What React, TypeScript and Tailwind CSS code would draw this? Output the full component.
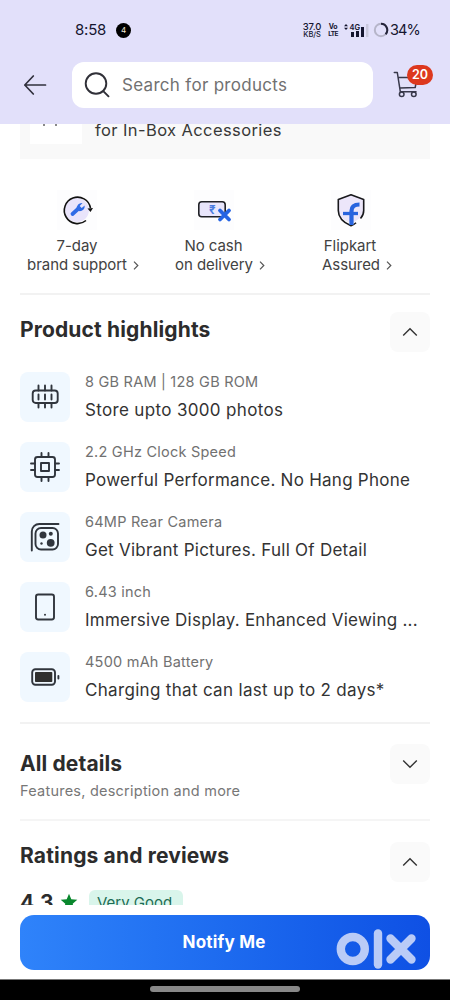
import React from 'react';

interface Highlight {
  id: string;
  label: string;
  value: string;
  valueClass: string;
  icon: React.ReactNode;
}

const stroke = {
  fill: 'none',
  stroke: '#30353d',
  strokeWidth: 1.9,
  strokeLinecap: 'round' as const,
  strokeLinejoin: 'round' as const,
};

const highlights: Highlight[] = [
  {
    id: 'memory',
    label: '8 GB RAM | 128 GB ROM',
    value: 'Store upto 3000 photos',
    valueClass: 'tracking-[0.34px]',
    icon: (
      <svg width="30" height="30" viewBox="0 0 30 30" {...stroke}>
        <rect x="2.7" y="8.5" width="25" height="12.5" rx="3" />
        <path d="M8.5 3.5v5M15 3.5v5M21.5 3.5v5M8.5 21v4.5M15 21v4.5M21.5 21v4.5M8.5 12.5v5M15 12.5v5M21.5 12.5v5" />
      </svg>
    ),
  },
  {
    id: 'processor',
    label: '2.2 GHz Clock Speed',
    value: 'Powerful Performance. No Hang Phone',
    valueClass: 'tracking-[0.26px]',
    icon: (
      <svg width="30" height="30" viewBox="0 0 30 30" {...stroke}>
        <rect x="5" y="5" width="20" height="20" rx="2.5" />
        <rect x="11" y="11" width="8" height="8" />
        <path d="M11.5 1v4M18.5 1v4M11.5 25v4M18.5 25v4M1 11.5h4M1 18h4M25 11.5h4M25 18h4" />
      </svg>
    ),
  },
  {
    id: 'camera',
    label: '64MP Rear Camera',
    value: 'Get Vibrant Pictures. Full Of Detail',
    valueClass: 'tracking-[0.26px]',
    icon: (
      <svg width="30" height="30" viewBox="0 0 30 30" {...stroke}>
        <path d="M1.8 28.5V9.5a7.5 7.5 0 0 1 7.5-7.5H28.5" />
        <rect x="5.5" y="6" width="22.5" height="21.5" rx="5.5" />
        <circle cx="13" cy="13" r="3.5" fill="#30353d" stroke="none" />
        <circle cx="20.7" cy="20.8" r="3.9" fill="#30353d" stroke="none" />
        <circle cx="20.8" cy="11.7" r="2" fill="#30353d" stroke="none" />
        <circle cx="11.5" cy="21.5" r="1.2" fill="#30353d" stroke="none" />
      </svg>
    ),
  },
  {
    id: 'display',
    label: '6.43 inch',
    value: 'Immersive Display. Enhanced Viewing ...',
    valueClass: 'tracking-[0.24px]',
    icon: (
      <svg width="30" height="30" viewBox="0 0 30 30" {...stroke}>
        <rect x="6" y="2.5" width="18" height="25" rx="2.2" />
        <circle cx="15" cy="22.7" r="1" fill="#30353d" stroke="none" />
      </svg>
    ),
  },
  {
    id: 'battery',
    label: '4500 mAh Battery',
    value: 'Charging that can last up to 2 days*',
    valueClass: 'tracking-[0.32px]',
    icon: (
      <svg width="30" height="30" viewBox="0 0 30 30" {...stroke}>
        <rect x="2.2" y="7.3" width="22.8" height="15.4" rx="3.2" />
        <rect x="5" y="10" width="17.3" height="10" rx="0.8" fill="#30302f" stroke="none" />
        <path d="M28.4 14v2.5" />
      </svg>
    ),
  },
];

function Chevron({ up = false }: { up?: boolean }) {
  return (
    <button className="flex h-10 w-10 shrink-0 items-center justify-center rounded-lg bg-[#fafafa]">
      <svg width="16" height="10" viewBox="0 0 16 10" fill="none" stroke="#333" strokeWidth="1.4">
        <path d={up ? 'M1.2 8.5 8 1.7l6.8 6.8' : 'M1.2 1.5 8 8.3l6.8-6.8'} />
      </svg>
    </button>
  );
}

function SmallChevron() {
  return (
    <svg className="ml-1.5 inline-block" width="6" height="9" viewBox="0 0 6 9" fill="none" stroke="#555" strokeWidth="1.2">
      <path d="M1 .7 4.8 4.5 1 8.3" />
    </svg>
  );
}

function StatusBar() {
  return (
    <div className="flex h-[60px] items-center pl-[75px] text-[#15152f]">
      <span className="w-[41px] text-[15px] tracking-[-0.2px]">8:58</span>
      <span className="flex h-[15px] w-[15px] items-center justify-center rounded-full bg-black text-[8px] text-[#f4e9d5]">4</span>
      <div className="ml-[171px] flex w-[20px] flex-col items-center font-medium">
        <span className="text-[9.5px] leading-[9px] tracking-[-0.1px]">37.0</span>
        <span className="text-[7.5px] leading-[8px] tracking-[-0.1px]">KB/S</span>
      </div>
      <div className="ml-[6px] flex w-[10px] flex-col items-center text-[7px] leading-[8px] font-bold">
        <span className="tracking-[-0.2px]">Vo</span>
        <span className="text-[6.5px] leading-[7px] tracking-[-0.7px]">LTE</span>
      </div>
      <svg className="ml-[5px]" width="26" height="15" viewBox="0 0 26 15">
        <path d="M3 1 5 3.3H1ZM3 7 1 4.7h4Z" fill="#15152f" />
        <text x="6.5" y="6.5" fontSize="7.5" fontWeight="600" fontFamily="Inter, sans-serif" fill="#15152f">4G</text>
        <path d="M8 9h3v5H8ZM13 8h3v6h-3ZM18 4h3v10h-3Z" fill="#15152f" />
        <path d="M23 1h2.4v13H23Z" fill="#c9c8dc" />
      </svg>
      <svg className="ml-[4px]" width="16" height="16" viewBox="0 0 16 16" fill="none" strokeWidth="2">
        <circle cx="8" cy="8" r="6.2" stroke="#b6b5c9" />
        <path d="M8 1.8A6.2 6.2 0 0 1 12.6 12.2" stroke="#24243a" />
      </svg>
      <span className="ml-[1px] text-[14.5px] tracking-[-0.9px]">34%</span>
    </div>
  );
}

function Header() {
  return (
    <header className="h-[124px] shrink-0 bg-[#e2e0fa]">
      <StatusBar />
      <div className="flex h-[49px] items-center">
        <svg className="ml-[23px] shrink-0" width="25" height="22" viewBox="0 0 25 22" fill="none" stroke="#30303c" strokeWidth="1.7" strokeLinecap="round" strokeLinejoin="round">
          <path d="M22.5 11H1.8M10.3 2 1.8 11l8.5 9" />
        </svg>
        <div className="ml-[24px] flex h-[46px] w-[301px] items-center rounded-[12px] bg-white">
          <svg className="ml-[12px] shrink-0" width="26" height="26" viewBox="0 0 26 26" fill="none" stroke="#303038" strokeWidth="1.9" strokeLinecap="round">
            <circle cx="12" cy="11.5" r="10.3" />
            <path d="m19.5 19.3 5 5" />
          </svg>
          <span className="ml-[12px] pt-[2px] text-[17px] tracking-[0.3px] whitespace-nowrap text-[#717171]">Search for products</span>
        </div>
        <div className="relative ml-[20px] h-[28px] w-[26px]">
          <svg width="26" height="28" viewBox="0 0 26 28" fill="none" stroke="#38384a" strokeWidth="1.5" strokeLinecap="round" strokeLinejoin="round">
            <path d="M1.3 1.5h3l3 19.2H23M5.2 6.5H24l-1.8 10L6.8 17" />
            <circle cx="8.7" cy="23.3" r="2.3" />
            <circle cx="20.8" cy="23.3" r="2.3" />
          </svg>
          <span className="absolute -top-[6px] left-[14px] flex h-[20px] w-[26px] items-center justify-center rounded-full bg-[#dd381e] pt-[1px] text-[12.5px] font-semibold text-white">
            20
          </span>
        </div>
      </div>
    </header>
  );
}

function SupportRow() {
  return (
    <div className="flex h-[136px] border-b-2 border-[#f2f2f2] pt-[31px] text-[15px] leading-[19px] tracking-[-0.05px] text-[#424242]">
      <div className="flex w-[126px] flex-col items-center">
        <svg width="40" height="40" viewBox="0 0 40 40" className="ml-[-13px]">
          <rect width="40" height="40" fill="#fdfdfe" />
          <circle cx="20" cy="20" r="12" fill="#e9e4fb" />
          <path d="M29 30.5A13.2 13.2 0 1 1 33.5 18" fill="none" stroke="#111" strokeWidth="1.6" />
          <path d="m30.500 18.500 3 3.500 2.500-4Z" fill="#111" />
          <path d="m15.500 24 6-5.500" stroke="#2f6be6" strokeWidth="3.800" strokeLinecap="round" />
          <path d="M25.500 13a5 5 0 0 0-5.600 6l2.200 2.100a5 5 0 0 0 5.600-5.600L24.700 18l-2-2Z" fill="#2f6be6" />
        </svg>
        <div className="mt-[6px] ml-[-12px]">7-day</div>
        <div className="whitespace-nowrap">brand support<SmallChevron /></div>
      </div>
      <div className="flex w-[148px] flex-col items-center">
        <svg width="40" height="40" viewBox="0 0 40 40" className="ml-[-12px]">
          <rect width="40" height="40" fill="#fdfdfe" />
          <rect x="4.8" y="11.8" width="26.4" height="15" rx="3" fill="#e8e5fb" stroke="#202126" strokeWidth="1.6" />
          <text x="15" y="23.5" fontSize="11.5" fontWeight="700" fill="#4b7de0" fontFamily="Inter, 'Noto Sans', sans-serif">₹</text>
          <path d="m26 20.5 9 9M35 20.5l-9 9" stroke="#2664e3" strokeWidth="3.8" strokeLinecap="round" />
        </svg>
        <div className="mt-[6px] ml-[-13px]">No cash</div>
        <div className="whitespace-nowrap">on delivery<SmallChevron /></div>
      </div>
      <div className="flex w-[126px] flex-col items-center">
        <svg width="40" height="40" viewBox="0 0 40 40" className="ml-[-12px]">
          <rect width="40" height="40" fill="#fdfdfe" />
          <path d="m20 5 12 4.5V22c0 5-6 8.5-12 11.500C14 31 8 27 8 21V9.500Z" fill="#ece6fa" />
          <path d="M29.500 28.500c2.300-2.500 3.200-5 3.200-8v-11L20 4.800 7.300 9.500v11c0 7.500 5 12 12.700 15.300q3-1 5-3" fill="none" stroke="#18181c" strokeWidth="1.6" strokeLinejoin="round" />
          <path d="M20.500 35V21q0-6.500 8-6.500" fill="none" stroke="#2864de" strokeWidth="4.2" />
          <path d="M12 23.500h15" stroke="#2864de" strokeWidth="3.3" />
        </svg>
        <div className="mt-[6px] ml-[-14px]">Flipkart</div>
        <div className="whitespace-nowrap">Assured<SmallChevron /></div>
      </div>
    </div>
  );
}

export default function App() {
  return (
    <div className="flex h-[1000px] w-[450px] flex-col overflow-hidden bg-white font-['Inter',sans-serif]">
      <Header />

      <main className="h-[781px] shrink-0 overflow-hidden px-5">
        <div className="flex h-[35px] bg-[#f9f9f9] pl-[10px]">
          <div className="flex h-[20px] w-[52px] gap-[10px] bg-white pl-[13px]">
            <span className="h-[2px] w-[2px] bg-[#888]" />
            <span className="h-[2px] w-[2px] bg-[#888]" />
          </div>
          <span className="mt-[-4px] ml-[13px] text-[16.5px] leading-[20px] tracking-[0.4px] text-[#383838]">for In-Box Accessories</span>
        </div>

        <SupportRow />

        <section className="h-[429px] border-b-2 border-[#f2f2f2] pt-[17px]">
          <div className="flex h-[60px] justify-between">
            <h2 className="pt-[4px] text-[21px] leading-[28px] font-bold tracking-[0.14px] text-[#2c2c2c]">Product highlights</h2>
            <Chevron up />
          </div>
          <div className="flex flex-col gap-5">
            {highlights.map((item) => (
              <div key={item.id} className="flex h-[50px]">
                <div className="flex h-[50px] w-[50px] items-center justify-center rounded-[8px] bg-[#f0f8ff]">
                  {item.icon}
                </div>
                <div className="ml-[15px] whitespace-nowrap">
                  <p className="text-[14.5px] leading-[20px] tracking-[0.23px] text-[#717171]">{item.label}</p>
                  <p className={`mt-[6px] text-[17px] leading-[24px] text-[#333] ${item.valueClass}`}>{item.value}</p>
                </div>
              </div>
            ))}
          </div>
        </section>

        <section className="flex h-[97px] justify-between border-b-2 border-[#f5f5f5] pt-[20px]">
          <div>
            <h2 className="pt-[6px] text-[21px] leading-[28px] font-bold tracking-[0.12px] text-[#2c2c2c]">All details</h2>
            <p className="mt-[3px] text-[14.5px] leading-[20px] tracking-[0.23px] text-[#777]">Features, description and more</p>
          </div>
          <Chevron />
        </section>

        <section className="pt-[21px]">
          <div className="flex h-[47px] justify-between">
            <h2 className="text-[21px] leading-[28px] font-bold tracking-[0.16px] text-[#2c2c2c]">Ratings and reviews</h2>
            <Chevron up />
          </div>
          <div className="flex h-[28px] items-start">
            <span className="w-[40px] text-[21px] leading-[28px] font-bold text-[#2c2c2c]">4.3</span>
            <svg className="mt-[4px]" width="18" height="17" viewBox="0 0 18 17">
              <path d="M9 .8 11.3 6.2l6 .6-4.6 4 1.4 5.7L9 13.5l-5.1 3 1.4-5.7-4.600-4 6-.6Z" fill="#09872d" />
            </svg>
            <span className="mt-[1px] ml-[11px] flex h-[26px] w-[94px] items-center rounded-[6px] bg-[#d9f5eb] pl-[8px] text-[15px] text-[#1d6d55]">Very Good</span>
          </div>
        </section>
      </main>

      <footer className="h-[95px] shrink-0">
        <div className="h-[74px] px-5 pt-[10px]">
          <button className="relative flex h-[55px] w-full items-center justify-center rounded-[14px] bg-linear-to-r from-[#2f83fa] to-[#0f50e4] text-[17px] font-bold tracking-[0.2px] text-white">
            <span className="mr-[2px] pt-[1px]">Notify Me</span>
            <svg className="absolute top-[14px] right-[14px]" width="80" height="40" viewBox="0 0 80 40" fill="none" stroke="#b9cbf7" strokeLinecap="round">
              <circle cx="16.8" cy="20" r="12" strokeWidth="8.4" />
              <path d="M42 4.5v31" strokeWidth="8.4" />
              <path d="m54.5 9.500 21 21M75.500 9.500l-21 21" strokeWidth="8.4" />
            </svg>
          </button>
        </div>
        <div className="flex h-[21px] justify-center border-t border-[#777] bg-black pt-[6px]">
          <span className="h-[6px] w-[150px] rounded-full bg-[#888]" />
        </div>
      </footer>
    </div>
  );
}
